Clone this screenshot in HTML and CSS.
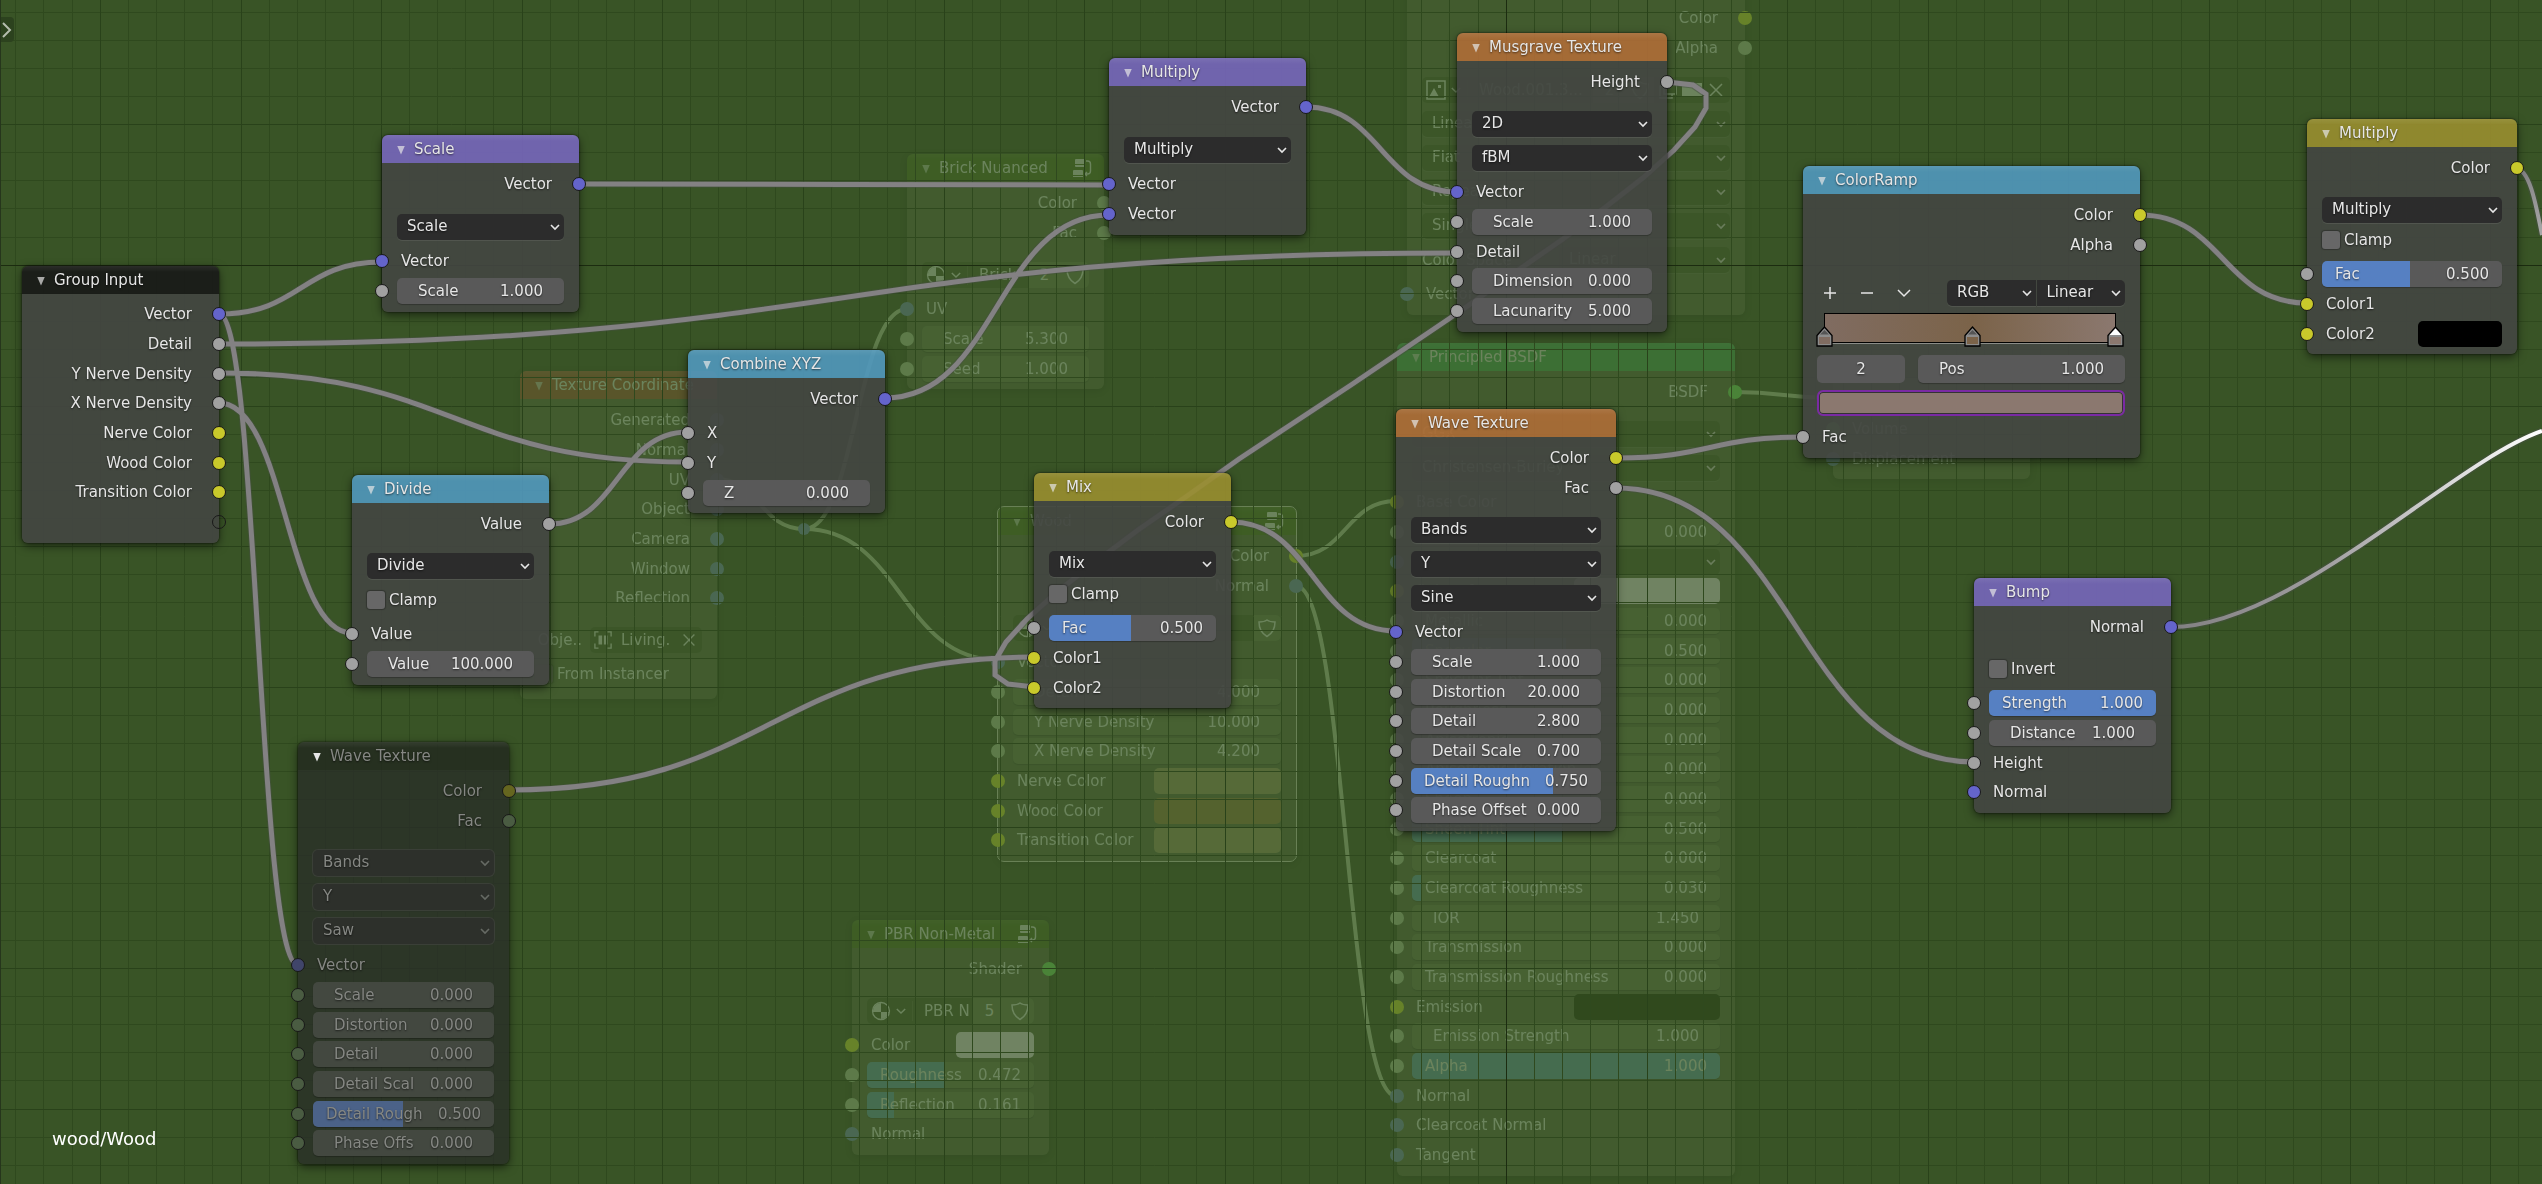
FILE: index.html
```html
<!DOCTYPE html>
<html lang="en">
<head>
<meta charset="utf-8">
<meta name="viewport" content="width=device-width, initial-scale=1">
<title>wood/Wood - Node Editor</title>
<link rel="stylesheet" href="styles.css">
</head>
<body>
<svg class="defs" aria-hidden="true">
  <symbol id="i-group" viewBox="0 0 20 20">
    <path fill="currentColor" d="M4 1h8a1 1 0 0 1 1 1v4H3V2a1 1 0 0 1 1-1zM3 7h10v1a1 1 0 0 1-1 1H4a1 1 0 0 1-1-1zM2 12h8a1 1 0 0 1 1 1v4H1v-4a1 1 0 0 1 1-1zM1 18h10v1H1z"/>
    <path fill="none" stroke="currentColor" stroke-width="1.4" d="M14 3h1.500a3 3 0 0 1 3 3v7a3 3 0 0 1-3 3H13m2-2-2 2 2 2"/>
  </symbol>
  <symbol id="i-material" viewBox="0 0 20 20">
    <circle cx="10" cy="10" r="8.500" fill="none" stroke="currentColor" stroke-width="1.300"/>
    <path fill="currentColor" d="M10 2v9H2a8 8 0 0 1 8-9zM10 11h8a8 8 0 0 1-8 7z"/>
  </symbol>
  <symbol id="i-shield" viewBox="0 0 20 20">
    <path fill="none" stroke="currentColor" stroke-width="1.500" d="M10 2c2 1.500 5 2 8 2 0 7-2 11-8 14.500C4 15 2 11 2 4c3 0 6-.5 8-2z"/>
  </symbol>
  <symbol id="i-image" viewBox="0 0 20 20">
    <path fill="none" stroke="currentColor" stroke-width="1.500" d="M1 1h18v18H1z"/>
    <path fill="currentColor" d="M3 17l5-9 5 9zM12 5h3v3h-3z"/>
  </symbol>
  <symbol id="i-object" viewBox="0 0 20 20">
    <path fill="none" stroke="currentColor" stroke-width="1.500" d="M1 6V1h4M15 1h4v5M19 14v5h-4M5 19H1v-5"/>
    <path fill="currentColor" d="M5 5h4v10H5zM11 5h4v10h-4z"/>
  </symbol>
  <symbol id="i-copy" viewBox="0 0 20 20">
    <path fill="none" stroke="currentColor" stroke-width="1.500" d="M6 2h12v12H6zM6 6H2v12h12v-4"/>
  </symbol>
  <symbol id="i-x" viewBox="0 0 20 20">
    <path fill="none" stroke="currentColor" stroke-width="1.500" d="M4 4l12 12M16 4L4 16"/>
  </symbol>
  <symbol id="i-down" viewBox="0 0 20 20">
    <path fill="none" stroke="currentColor" stroke-width="2" d="M4 7l6 6 6-6"/>
  </symbol>
</svg>

<main class="editor">

  <!-- parent node tree, dimmed behind the group being edited -->
  <div class="backdrop">
    <svg class="wires">
      <path d="M716 479C760 479 760 529 804 529C856 529 856 309 907 309"/>
      <path d="M804 529C901 529 901 660 998 660"/>
      <path d="M1296 556C1346 556 1346 501 1396 501"/>
      <path d="M1296 586C1346 586 1346 1096 1396 1096"/>
      <path d="M1735 392C1784 392 1784 398 1833 398"/>
      <circle class="reroute" cx="804" cy="529" r="6"/>
    </svg>

    <section class="node texture" id="g-coord">
      <header><button class="fold" aria-label="Collapse"></button><h2>Texture Coordinate</h2></header>
      <div class="body">
        <ul class="outs">
          <li>Generated<i class="s vec"></i></li><li>Normal<i class="s vec"></i></li><li>UV<i class="s vec"></i></li><li>Object<i class="s vec"></i></li>
          <li>Camera<i class="s vec"></i></li><li>Window<i class="s vec"></i></li><li>Reflection<i class="s vec"></i></li>
        </ul>
        <div class="props">
          <div class="prop obj"><span>Obje..</span><div class="id"><svg><use href="#i-object"/></svg><span class="grow">Living.</span><button aria-label="Clear"><svg><use href="#i-x"/></svg></button></div></div>
          <label class="check"><input type="checkbox">From Instancer</label>
        </div>
      </div>
    </section>

    <section class="node group" id="g-brick">
      <header><button class="fold" aria-label="Collapse"></button><h2>Brick Nuanced</h2><svg class="gi"><use href="#i-group"/></svg></header>
      <div class="body">
        <ul class="outs"><li>Color<i class="s val"></i></li><li>Fac<i class="s val"></i></li></ul>
        <div class="props"><div class="prop"><div class="id"><button aria-label="Browse"><svg><use href="#i-material"/></svg><svg class="sm"><use href="#i-down"/></svg></button><span class="grow name">Brick</span><span class="users">2</span><button class="fake" aria-label="Fake user"><svg><use href="#i-shield"/></svg></button></div></div></div>
        <ul class="ins">
          <li><i class="s vec"></i>UV</li>
          <li><i class="s val"></i><label class="num"><span>Scale</span><input value="5.300"></label></li>
          <li><i class="s val"></i><label class="num"><span>Seed</span><input value="1.000"></label></li>
        </ul>
      </div>
    </section>

    <section class="node group active" id="g-wood">
      <header><button class="fold" aria-label="Collapse"></button><h2>Wood</h2><svg class="gi"><use href="#i-group"/></svg></header>
      <div class="body">
        <ul class="outs"><li>Color<i class="s col"></i></li><li>Normal<i class="s vec"></i></li></ul>
        <div class="props"><div class="prop"><div class="id"><button aria-label="Browse"><svg><use href="#i-material"/></svg><svg class="sm"><use href="#i-down"/></svg></button><span class="grow name">Wood</span><button class="fake" aria-label="Fake user"><svg><use href="#i-shield"/></svg></button></div></div></div>
        <ul class="ins">
          <li><i class="s vec"></i>Vector</li>
          <li><i class="s val"></i><label class="num"><span>Detail</span><input value="4.000"></label></li>
          <li><i class="s val"></i><label class="num"><span>Y Nerve Density</span><input value="10.000"></label></li>
          <li><i class="s val"></i><label class="num"><span>X Nerve Density</span><input value="4.200"></label></li>
          <li><i class="s col"></i>Nerve Color<button class="swatch nerve" aria-label="Nerve Color"></button></li>
          <li><i class="s col"></i>Wood Color<button class="swatch wood" aria-label="Wood Color"></button></li>
          <li><i class="s col"></i>Transition Color<button class="swatch nerve" aria-label="Transition Color"></button></li>
        </ul>
      </div>
    </section>

    <section class="node group" id="g-pbr">
      <header><button class="fold" aria-label="Collapse"></button><h2>PBR Non-Metal</h2><svg class="gi"><use href="#i-group"/></svg></header>
      <div class="body">
        <ul class="outs"><li>Shader<i class="s shd"></i></li></ul>
        <div class="props"><div class="prop"><div class="id"><button aria-label="Browse"><svg><use href="#i-material"/></svg><svg class="sm"><use href="#i-down"/></svg></button><span class="grow name">PBR N</span><span class="users">5</span><button class="fake" aria-label="Fake user"><svg><use href="#i-shield"/></svg></button></div></div></div>
        <ul class="ins">
          <li><i class="s col"></i>Color<button class="swatch white" aria-label="Color"></button></li>
          <li><i class="s val"></i><label class="num slider" style="--fill:47%"><span>Roughness</span><input value="0.472"></label></li>
          <li><i class="s val"></i><label class="num slider" style="--fill:16%"><span>Reflection</span><input value="0.161"></label></li>
          <li><i class="s vec"></i>Normal</li>
        </ul>
      </div>
    </section>

    <section class="node texture" id="g-image">
      <header><button class="fold" aria-label="Collapse"></button><h2>Image Texture</h2></header>
      <div class="body">
        <ul class="outs"><li>Color<i class="s col"></i></li><li>Alpha<i class="s val"></i></li></ul>
        <div class="props">
          <div class="prop"><div class="id"><button aria-label="Browse"><svg><use href="#i-image"/></svg><svg class="sm"><use href="#i-down"/></svg></button><span class="grow name">Wood.001.3...</span><span class="users">2</span><button class="fake" aria-label="Fake user"><svg><use href="#i-shield"/></svg></button><button aria-label="New"><svg><use href="#i-copy"/></svg></button><span class="folder"></span><button aria-label="Unlink"><svg><use href="#i-x"/></svg></button></div></div>
          <div class="prop"><select aria-label="Interpolation"><option>Linear</option></select></div>
          <div class="prop"><select aria-label="Projection"><option>Flat</option></select></div>
          <div class="prop"><select aria-label="Extension"><option>Repeat</option></select></div>
          <div class="prop"><select aria-label="Source"><option>Single Image</option></select></div>
          <label class="prop half"><span>Color Space</span><select><option>Linear</option></select></label>
        </div>
        <ul class="ins"><li><i class="s vec"></i>Vector</li></ul>
      </div>
    </section>

    <section class="node shader" id="g-bsdf">
      <header><button class="fold" aria-label="Collapse"></button><h2>Principled BSDF</h2></header>
      <div class="body">
        <ul class="outs"><li>BSDF<i class="s shd"></i></li></ul>
        <div class="props">
          <div class="prop"><select aria-label="Distribution"><option>GGX</option></select></div>
          <div class="prop"><select aria-label="Subsurface method"><option>Christensen-Burley</option></select></div>
        </div>
        <ul class="ins">
          <li><i class="s col"></i>Base Color</li>
          <li><i class="s val"></i><label class="num slider"><span>Subsurface</span><input value="0.000"></label></li>
          <li class="pick"><i class="s vec"></i><select aria-label="Subsurface Radius"><option></option></select></li>
          <li><i class="s col"></i>Subsurface<button class="swatch white" aria-label="Subsurface Color"></button></li>
          <li><i class="s val"></i><label class="num slider"><span>Metallic</span><input value="0.000"></label></li>
          <li><i class="s val"></i><label class="num slider" style="--fill:50%"><span>Specular</span><input value="0.500"></label></li>
          <li><i class="s val"></i><label class="num slider"><span>Specular Tint</span><input value="0.000"></label></li>
          <li><i class="s val"></i><label class="num slider"><span>Roughness</span><input value="0.000"></label></li>
          <li><i class="s val"></i><label class="num slider"><span>Anisotropic</span><input value="0.000"></label></li>
          <li><i class="s val"></i><label class="num slider"><span>Anisotropic Rotation</span><input value="0.000"></label></li>
          <li><i class="s val"></i><label class="num slider"><span>Sheen</span><input value="0.000"></label></li>
          <li><i class="s val"></i><label class="num slider" style="--fill:49%"><span>Sheen Tint</span><input value="0.500"></label></li>
          <li><i class="s val"></i><label class="num slider"><span>Clearcoat</span><input value="0.000"></label></li>
          <li><i class="s val"></i><label class="num slider" style="--fill:3%"><span>Clearcoat Roughness</span><input value="0.030"></label></li>
          <li><i class="s val"></i><label class="num"><span>IOR</span><input value="1.450"></label></li>
          <li><i class="s val"></i><label class="num slider"><span>Transmission</span><input value="0.000"></label></li>
          <li><i class="s val"></i><label class="num slider"><span>Transmission Roughness</span><input value="0.000"></label></li>
          <li><i class="s col"></i>Emission<button class="swatch black" aria-label="Emission"></button></li>
          <li><i class="s val"></i><label class="num"><span>Emission Strength</span><input value="1.000"></label></li>
          <li><i class="s val"></i><label class="num slider" style="--fill:100%"><span>Alpha</span><input value="1.000"></label></li>
          <li><i class="s vec"></i>Normal</li>
          <li><i class="s vec"></i>Clearcoat Normal</li>
          <li><i class="s vec"></i>Tangent</li>
        </ul>
      </div>
    </section>

    <section class="node" id="g-out">
      <div class="body">
        <ul class="ins"><li><i class="s shd"></i>Surface</li><li><i class="s shd"></i>Volume</li><li><i class="s vec"></i>Displacement</li></ul>
      </div>
    </section>
  </div>

  <svg class="wires" aria-hidden="true">
    <defs>
      <pattern id="grid" x="100" y="265" width="703" height="703" patternUnits="userSpaceOnUse">
        <path class="minor" d="M28.500 0V703M56.500 0V703M84.500 0V703M112.500 0V703M169.500 0V703M197.500 0V703M225.500 0V703M253.500 0V703M309.500 0V703M337.500 0V703M365.500 0V703M393.500 0V703M450.500 0V703M478.500 0V703M506.500 0V703M534.500 0V703M590.500 0V703M618.500 0V703M646.500 0V703M675.500 0V703M0 28.500H703M0 56.500H703M0 84.500H703M0 112.500H703M0 169.500H703M0 197.500H703M0 225.500H703M0 253.500H703M0 309.500H703M0 337.500H703M0 365.500H703M0 393.500H703M0 450.500H703M0 478.500H703M0 506.500H703M0 534.500H703M0 590.500H703M0 618.500H703M0 646.500H703M0 675.500H703"/>
        <path class="major" d="M.5 0V703M141.500 0V703M281.500 0V703M422.500 0V703M562.500 0V703M0 .5H703M0 141.500H703M0 281.500H703M0 422.500H703M0 562.500H703"/>
      </pattern>
      <linearGradient id="sel" gradientUnits="userSpaceOnUse" x1="2171" y1="627" x2="2542" y2="431"><stop offset="0" stop-color="#828082"/><stop offset=".4" stop-color="#a2a0a2"/><stop offset=".8" stop-color="#e0e0e0"/><stop offset="1" stop-color="#fff"/></linearGradient>
      <linearGradient id="sel2" gradientUnits="userSpaceOnUse" x1="2516" y1="168" x2="2542" y2="235"><stop offset="0" stop-color="#828082"/><stop offset="1" stop-color="#a8a8a8"/></linearGradient>
    </defs>
    <rect width="100%" height="100%" fill="url(#grid)"/>
    <path class="axis" d="M0 265.500H9999M1506.500 0V9999"/>
    <g id="links">
      <g class="edge">
        <path id="w1" d="M219 314C301 314 301 262 382 262M219 314C258 314 258 965 298 965M219 344C838 344 838 253 1457 253M219 373C453 373 453 462 688 462M219 403C286 403 286 633 352 633M549 524C618 524 618 432 688 432M579 184C844 184 844 185 1109 185M885 398C997 398 997 215 1109 215M1306 107C1381 107 1381 192 1457 192M509 790C771 790 771 657 1034 657M1231 522C1313 522 1313 631 1396 631M1616 458C1710 458 1710 437 1803 437M1616 488C1795 488 1795 762 1974 762M2140 215C2223 215 2223 303 2307 303M1667 82L1693 85L1706 94L1706 108L1695 127L1674 150L1644 177L1607 206L1563 239L1514 273L1462 310L1351 385L1239 459L1187 496L1138 530L1094 563L1057 592L1027 619L1006 642L995 661L995 675L1008 684L1034 687"/>
      </g>
      <use class="core" href="#w1"/>
    </g>
    <path class="edge" d="M2171 627C2291 627 2452 462 2542 431M2516 168C2530 170 2536 205 2542 235"/>
    <path stroke="url(#sel)" stroke-width="4" d="M2171 627C2291 627 2452 462 2542 431"/>
    <path stroke="url(#sel2)" stroke-width="4" d="M2516 168C2530 170 2536 205 2542 235"/>
  </svg>

  <section class="node io" id="n-input">
    <header><button class="fold" aria-label="Collapse"></button><h2>Group Input</h2></header>
    <div class="body">
      <ul class="outs">
        <li>Vector<i class="s vec"></i></li><li>Detail<i class="s val"></i></li><li>Y Nerve Density<i class="s val"></i></li><li>X Nerve Density<i class="s val"></i></li>
        <li>Nerve Color<i class="s col"></i></li><li>Wood Color<i class="s col"></i></li><li>Transition Color<i class="s col"></i></li><li><i class="s empty"></i></li>
      </ul>
    </div>
  </section>

  <section class="node vector" id="n-scale">
    <header><button class="fold" aria-label="Collapse"></button><h2>Scale</h2></header>
    <div class="body">
      <ul class="outs"><li>Vector<i class="s vec"></i></li></ul>
      <div class="props"><div class="prop"><select aria-label="Operation"><option>Scale</option></select></div></div>
      <ul class="ins"><li><i class="s vec"></i>Vector</li><li><i class="s val"></i><label class="num"><span>Scale</span><input value="1.000"></label></li></ul>
    </div>
  </section>

  <section class="node convert" id="n-divide">
    <header><button class="fold" aria-label="Collapse"></button><h2>Divide</h2></header>
    <div class="body">
      <ul class="outs"><li>Value<i class="s val"></i></li></ul>
      <div class="props"><div class="prop"><select aria-label="Operation"><option>Divide</option></select></div><label class="check"><input type="checkbox">Clamp</label></div>
      <ul class="ins"><li><i class="s val"></i>Value</li><li><i class="s val"></i><label class="num"><span>Value</span><input value="100.000"></label></li></ul>
    </div>
  </section>

  <section class="node muted" id="n-saw">
    <header><button class="fold" aria-label="Collapse"></button><h2>Wave Texture</h2></header>
    <div class="body">
      <ul class="outs"><li>Color<i class="s col"></i></li><li>Fac<i class="s val"></i></li></ul>
      <div class="props">
        <div class="prop"><select aria-label="Wave type"><option>Bands</option></select></div>
        <div class="prop"><select aria-label="Direction"><option>Y</option></select></div>
        <div class="prop"><select aria-label="Profile"><option>Saw</option></select></div>
      </div>
      <ul class="ins">
        <li><i class="s vec"></i>Vector</li>
        <li><i class="s val"></i><label class="num"><span>Scale</span><input value="0.000"></label></li>
        <li><i class="s val"></i><label class="num"><span>Distortion</span><input value="0.000"></label></li>
        <li><i class="s val"></i><label class="num"><span>Detail</span><input value="0.000"></label></li>
        <li><i class="s val"></i><label class="num"><span>Detail Scal</span><input value="0.000"></label></li>
        <li><i class="s val"></i><label class="num slider" style="--fill:50%"><span>Detail Rough</span><input value="0.500"></label></li>
        <li><i class="s val"></i><label class="num"><span>Phase Offs</span><input value="0.000"></label></li>
      </ul>
    </div>
  </section>

  <section class="node convert" id="n-combine">
    <header><button class="fold" aria-label="Collapse"></button><h2>Combine XYZ</h2></header>
    <div class="body">
      <ul class="outs"><li>Vector<i class="s vec"></i></li></ul>
      <ul class="ins"><li><i class="s val"></i>X</li><li><i class="s val"></i>Y</li><li><i class="s val"></i><label class="num"><span>Z</span><input value="0.000"></label></li></ul>
    </div>
  </section>

  <section class="node vector" id="n-multiply">
    <header><button class="fold" aria-label="Collapse"></button><h2>Multiply</h2></header>
    <div class="body">
      <ul class="outs"><li>Vector<i class="s vec"></i></li></ul>
      <div class="props"><div class="prop"><select aria-label="Operation"><option>Multiply</option></select></div></div>
      <ul class="ins"><li><i class="s vec"></i>Vector</li><li><i class="s vec"></i>Vector</li></ul>
    </div>
  </section>

  <section class="node color" id="n-mix">
    <header><button class="fold" aria-label="Collapse"></button><h2>Mix</h2></header>
    <div class="body">
      <ul class="outs"><li>Color<i class="s col"></i></li></ul>
      <div class="props joined"><div class="prop"><select aria-label="Blend mode"><option>Mix</option></select></div><label class="check"><input type="checkbox">Clamp</label></div>
      <ul class="ins">
        <li><i class="s val"></i><label class="num slider" style="--fill:49%"><span>Fac</span><input value="0.500"></label></li>
        <li><i class="s col"></i>Color1</li><li><i class="s col"></i>Color2</li>
      </ul>
    </div>
  </section>

  <section class="node texture" id="n-musgrave">
    <header><button class="fold" aria-label="Collapse"></button><h2>Musgrave Texture</h2></header>
    <div class="body">
      <ul class="outs"><li>Height<i class="s val"></i></li></ul>
      <div class="props">
        <div class="prop"><select aria-label="Dimensions"><option>2D</option></select></div>
        <div class="prop"><select aria-label="Type"><option>fBM</option></select></div>
      </div>
      <ul class="ins">
        <li><i class="s vec"></i>Vector</li>
        <li><i class="s val"></i><label class="num"><span>Scale</span><input value="1.000"></label></li>
        <li><i class="s val"></i>Detail</li>
        <li><i class="s val"></i><label class="num"><span>Dimension</span><input value="0.000"></label></li>
        <li><i class="s val"></i><label class="num"><span>Lacunarity</span><input value="5.000"></label></li>
      </ul>
    </div>
  </section>

  <section class="node texture" id="n-wave">
    <header><button class="fold" aria-label="Collapse"></button><h2>Wave Texture</h2></header>
    <div class="body">
      <ul class="outs"><li>Color<i class="s col"></i></li><li>Fac<i class="s val"></i></li></ul>
      <div class="props">
        <div class="prop"><select aria-label="Wave type"><option>Bands</option></select></div>
        <div class="prop"><select aria-label="Direction"><option>Y</option></select></div>
        <div class="prop"><select aria-label="Profile"><option>Sine</option></select></div>
      </div>
      <ul class="ins">
        <li><i class="s vec"></i>Vector</li>
        <li><i class="s val"></i><label class="num"><span>Scale</span><input value="1.000"></label></li>
        <li><i class="s val"></i><label class="num"><span>Distortion</span><input value="20.000"></label></li>
        <li><i class="s val"></i><label class="num"><span>Detail</span><input value="2.800"></label></li>
        <li><i class="s val"></i><label class="num"><span>Detail Scale</span><input value="0.700"></label></li>
        <li><i class="s val"></i><label class="num slider" style="--fill:75%"><span>Detail Roughn</span><input value="0.750"></label></li>
        <li><i class="s val"></i><label class="num"><span>Phase Offset</span><input value="0.000"></label></li>
      </ul>
    </div>
  </section>

  <section class="node convert" id="n-ramp">
    <header><button class="fold" aria-label="Collapse"></button><h2>ColorRamp</h2></header>
    <div class="body">
      <ul class="outs"><li>Color<i class="s col"></i></li><li>Alpha<i class="s val"></i></li></ul>
      <div class="ramp">
        <div class="tools">
          <button aria-label="Add stop"><svg viewBox="0 0 14 14"><path d="M7 1v12M1 7h12"/></svg></button>
          <button aria-label="Delete stop"><svg viewBox="0 0 14 14"><path d="M1 7h12"/></svg></button>
          <button aria-label="Tools"><svg viewBox="0 0 14 14"><path d="M1 4l6 6 6-6"/></svg></button>
          <div class="modes"><select aria-label="Color mode"><option>RGB</option></select><select aria-label="Interpolation"><option>Linear</option></select></div>
        </div>
        <div class="gradient">
          <svg class="stop first" viewBox="0 0 17 21"><path class="box" d="M1 9.500L8.500 1 16 9.500V20H1z"/><path class="tip" d="M4 8.500L8.500 4l4.500 4.500z"/><path fill="#806c61" d="M3 11h11v7H3z"/></svg>
          <svg class="stop mid" viewBox="0 0 17 21"><path class="box" d="M1 9.500L8.500 1 16 9.500V20H1z"/><path class="tip" d="M4 8.500L8.500 4l4.500 4.500z"/><path fill="#7b6349" d="M3 11h11v7H3z"/></svg>
          <svg class="stop last" viewBox="0 0 17 21"><path class="box" d="M1 9.500L8.500 1 16 9.500V20H1z"/><path class="tip on" d="M2.500 9L8.500 2.500 14.500 9z"/><path fill="#8b786f" d="M3 11h11v7H3z"/></svg>
        </div>
        <div class="pair"><input class="index" aria-label="Active stop" value="2"><label class="num"><span>Pos</span><input value="1.000"></label></div>
        <button class="stopcolor" aria-label="Stop color"></button>
      </div>
      <ul class="ins"><li><i class="s val"></i>Fac</li></ul>
    </div>
  </section>

  <section class="node color" id="n-mulcolor">
    <header><button class="fold" aria-label="Collapse"></button><h2>Multiply</h2></header>
    <div class="body">
      <ul class="outs"><li>Color<i class="s col"></i></li></ul>
      <div class="props joined"><div class="prop"><select aria-label="Blend mode"><option>Multiply</option></select></div><label class="check"><input type="checkbox">Clamp</label></div>
      <ul class="ins">
        <li><i class="s val"></i><label class="num slider" style="--fill:49%"><span>Fac</span><input value="0.500"></label></li>
        <li><i class="s col"></i>Color1</li>
        <li><i class="s col"></i>Color2<button class="swatch black" aria-label="Color2"></button></li>
      </ul>
    </div>
  </section>

  <section class="node vector" id="n-bump">
    <header><button class="fold" aria-label="Collapse"></button><h2>Bump</h2></header>
    <div class="body">
      <ul class="outs"><li>Normal<i class="s vec"></i></li></ul>
      <div class="props"><label class="check"><input type="checkbox">Invert</label></div>
      <ul class="ins">
        <li><i class="s val"></i><label class="num slider" style="--fill:100%"><span>Strength</span><input value="1.000"></label></li>
        <li><i class="s val"></i><label class="num"><span>Distance</span><input value="1.000"></label></li>
        <li><i class="s val"></i>Height</li><li><i class="s vec"></i>Normal</li>
      </ul>
    </div>
  </section>

  <button class="sidetab" aria-label="Show toolbar"><svg viewBox="0 0 10 16"><path d="M1 1l7 7-7 7"/></svg></button>
  <p class="path">wood/Wood</p>
</main>
</body>
</html>
```
FILE: styles.css
```css
* { box-sizing: border-box; }

body {
  margin: 0;
  background: #395426;
  color: #e6e6e6;
  font: 15px/20px "DejaVu Sans", sans-serif;
}

button, input, select { font: inherit; color: inherit; margin: 0; padding: 0; border: 0; background: none; }
input, select { appearance: none; outline: 0; text-shadow: inherit; }
ul { list-style: none; margin: 0; padding: 0; }
.defs { position: absolute; width: 0; height: 0; }

.editor {
  position: relative;
  min-height: 100vh;
  overflow: hidden;
  border-left: 1px solid #26361c;
}

/* node canvas */
.wires { position: absolute; inset: 0 auto auto -1px; width: calc(100% + 1px); height: 100%; fill: none; }
.minor { stroke: #2f491e; }
.major { stroke: #29421a; }
.axis { stroke: #1c2c10; }
.edge { stroke: rgba(70, 80, 65, .5); stroke-width: 7; }
.core { stroke: #838183; stroke-width: 5; }

.backdrop {
  position: absolute;
  inset: 0;
  opacity: .28;
  --body: #597146;
  --field: #6b8654;
  --menu: #475f31;
  --fill-color: #67adbc;
  --vec: #769bc7;
  --val: #b9dfa6;
  --col: #ddfc34;
  --shd: #76ff6a;
  --rim: transparent;
  color: #ebffe8;
}
.backdrop .wires { stroke: #c0e3ae; stroke-width: 4; }
.reroute { fill: #769bc7; stroke: none; }

.editor {
  --body: rgba(68, 70, 67, .9);
  --field: #595959;
  --menu: #2c2c2c;
  --fill-color: #5680c2;
  --vec: #6464cb;
  --val: #a1a1a1;
  --col: #c9c92b;
  --shd: #63c763;
  --rim: #181818;
}

.node {
  position: absolute;
  width: 197px;
  border-radius: 6px;
  box-shadow: 0 3px 10px rgba(0, 0, 0, .55), 0 0 2px rgba(0, 0, 0, .8);
  text-shadow: 0 1px 2px rgba(0, 0, 0, .6);
}
.backdrop .node { box-shadow: 0 2px 8px rgba(0, 0, 0, .3); text-shadow: none; }

.node header {
  display: flex;
  align-items: center;
  height: 28px;
  padding: 0 12px 0 15px;
  border-radius: 6px 6px 0 0;
  background: linear-gradient(rgba(255, 255, 255, .07), transparent 6px) var(--head);
}
.node h2 { flex: 1; margin: 0 0 0 9px; font: inherit; white-space: nowrap; }
.fold { width: 8px; height: 9px; margin-top: 2px; background: currentColor; opacity: .7; clip-path: polygon(0 0, 100% 0, 50% 100%); }
.gi { width: 20px; height: 20px; }

.io { --head: rgba(25, 27, 24, .94); }
.vector { --head: rgba(119, 102, 188, .9); }
.convert { --head: rgba(81, 152, 190, .9); }
.texture { --head: rgba(173, 108, 55, .92); }
.color { --head: rgba(153, 142, 48, .9); }
.backdrop .group { --head: #4b7822; }
.backdrop .texture { --head: #ab5b38; }
.backdrop .shader { --head: #44b85c; }
.backdrop .active { outline: 1px solid #e0f5d0; }

.body { padding: 6px 0; border-radius: 0 0 6px 6px; background: var(--body); }
.io .body { padding-top: 5px; }

/* socket rows sit a touch under 30px apart on average */
.outs li, .ins li { position: relative; display: flex; align-items: center; height: 30px; white-space: nowrap; }
.outs li:nth-child(3n), .ins li:nth-child(3n) { height: 29px; }
.outs li { justify-content: flex-end; padding-right: 27px; }
.ins li { padding: 0 15px 0 19px; }
.outs + .ins { padding-top: 4px; }

.s { position: absolute; left: -7px; top: 8px; width: 14px; height: 14px; border: 1px solid var(--rim); border-radius: 50%; }
.outs .s { left: auto; right: -7px; }
.vec { background: var(--vec); }
.val { background: var(--val); }
.col { background: var(--col); }
.shd { background: var(--shd); }

.props { padding: 10px 15px 2px 15px; }
.prop { display: flex; align-items: center; height: 34px; }

select {
  flex: 1;
  min-width: 0;
  height: 26px;
  padding: 0 24px 2px 10px;
  border-radius: 5px;
  box-shadow: 0 1px 0 rgba(255, 255, 255, .08);
  background: var(--menu) url("data:image/svg+xml,%3Csvg xmlns='http://www.w3.org/2000/svg' width='10' height='8'%3E%3Cpath d='M1 2l4 4 4-4' fill='none' stroke='%23e6e6e6' stroke-width='1.600'/%3E%3C/svg%3E") no-repeat right 4px center;
}

.num {
  flex: 1;
  display: flex;
  align-items: center;
  min-width: 0;
  height: 26px;
  margin-left: -4px;
  padding: 0 21px;
  border-radius: 5px;
  box-shadow: 0 1px 1px rgba(0, 0, 0, .25);
  background: var(--field);
}
.num input { flex: 1 1 0; width: 0; min-width: 0; text-align: right; }
.slider { padding: 0 13px; background: linear-gradient(90deg, var(--fill-color) var(--fill, 0%), var(--field) var(--fill, 0%)); }

.check { display: flex; align-items: center; gap: 4px; height: 34px; }
.joined .check { height: 26px; margin-bottom: 4px; }
.check input { width: 18px; height: 18px; border-radius: 3px; background: #676767; box-shadow: 0 0 1px 1px rgba(0, 0, 0, .25); }

.swatch { width: 48%; height: 26px; margin-left: auto; border-radius: 5px; }
.black { background: #000; }
.white { background: #fff; }
.nerve { background: #a0a66a; }
.wood { background: #998a46; }
.backdrop .black { background: #193009; }

/* datablock selector */
.id { flex: 1; display: flex; align-items: center; height: 26px; border-radius: 5px; overflow: hidden; background: var(--menu); }
.id svg { width: 20px; height: 20px; flex: none; }
.id .sm { width: 14px; }
.id button { display: flex; align-items: center; gap: 3px; height: 26px; padding: 0 4px; }
.id .grow { flex: 1; padding: 0 2px 0 11px; overflow: hidden; white-space: nowrap; }
.name { border-left: 1px solid var(--body); }
.id .users { width: 33px; line-height: 26px; text-align: center; background: var(--field); }
.id .fake { background: var(--field); }
.folder { width: 20px; height: 14px; background: currentColor; }
.obj { gap: 8px; }
.obj .id { flex: none; width: 112px; padding-left: 4px; }
.obj .id .grow { padding-left: 9px; }
.obj .id button { padding: 0 4px 0 0; }
.obj > span { flex: 1; text-align: right; }
.obj svg { width: 18px; height: 18px; }
.half span, .half select { flex: 1; }
.ins .pick select { flex: none; width: 48%; margin-left: auto; }

/* muted node */
.muted {
  --head: rgba(35, 42, 32, .85);
  --body: rgba(41, 46, 40, .8);
  --field: #434840;
  --menu: #2d302b;
  --fill-color: #4b6288;
  --vec: #40456a;
  --val: #4a5c42;
  --col: #65661f;
  color: #858783;
}
.muted .fold { background: #e6e6e6; opacity: 1; }
.muted select { box-shadow: 0 0 0 1px #3a3f37; background-image: url("data:image/svg+xml,%3Csvg xmlns='http://www.w3.org/2000/svg' width='10' height='8'%3E%3Cpath d='M1 2l4 4 4-4' fill='none' stroke='%23666a64' stroke-width='1.600'/%3E%3C/svg%3E"); }

/* color ramp */
.ramp { padding: 20px 15px 6px 14px; }
.tools { display: flex; align-items: center; }
.tools button { width: 37px; height: 26px; padding-left: 6px; text-align: left; }
.tools svg { width: 14px; height: 14px; display: block; fill: none; stroke: #e6e6e6; stroke-width: 1.5px; }
.modes { display: flex; gap: 1px; width: 178px; margin-left: auto; }
.modes select:first-child { border-radius: 5px 0 0 5px; }
.modes select:last-child { border-radius: 0 5px 5px 0; }
.gradient { position: relative; height: 30px; margin: 7px 9px 12px 7px; border: 1px solid #000; box-shadow: 0 1px 0 #8a8c88; background: linear-gradient(90deg, #806c61, #7b6349 51%, #8b786f); }
.stop { position: absolute; top: 12px; width: 17px; height: 21px; }
.first { left: -9px; }
.mid { left: calc(51% - 9px); }
.last { left: calc(100% - 8px); }
.box { fill: #8c8c8c; stroke: #000; stroke-width: 1.3px; }
.tip { fill: #555; }
.on { fill: #fff; }
.pair { display: flex; gap: 13px; }
.pair .num { margin: 0; height: 28px; }
.index { width: 88px; height: 28px; border-radius: 5px; text-align: center; background: var(--field); }
.stopcolor { display: block; width: 100%; height: 26px; margin-top: 7px; border: 2px solid #7a2aa3; border-radius: 6px; background: #8b786f; box-shadow: inset 0 0 0 1px #333; }

/* node placement */
#n-input { left: 21px; top: 266px; }
#n-scale { left: 381px; top: 135px; }
#n-divide { left: 351px; top: 475px; }
#n-saw { left: 297px; top: 742px; width: 211px; }
#n-combine { left: 687px; top: 350px; }
#n-multiply { left: 1108px; top: 58px; }
#n-mix { left: 1033px; top: 473px; }
#n-musgrave { left: 1456px; top: 33px; width: 210px; }
#n-wave { left: 1395px; top: 409px; width: 220px; }
#n-ramp { left: 1802px; top: 166px; width: 337px; }
#n-mulcolor { left: 2306px; top: 119px; width: 210px; }
#n-bump { left: 1973px; top: 578px; }
#n-scale .props, #n-multiply .props { padding-top: 11px; }
#g-coord { left: 519px; top: 371px; }
#g-brick { left: 906px; top: 154px; }
#g-wood { left: 997px; top: 507px; width: 298px; }
#g-pbr { left: 851px; top: 920px; }
#g-image { left: 1406px; top: -31px; width: 338px; }
#g-bsdf { left: 1396px; top: 343px; width: 338px; }
#g-out { left: 1832px; top: 378px; }

.sidetab { position: absolute; left: 0; top: 17px; width: 13px; height: 25px; padding: 1px; border-radius: 0 4px 4px 0; background: #2c421e; }
.sidetab svg { display: block; width: 10px; height: 16px; fill: none; stroke: #b4bcae; stroke-width: 2px; }
.path { position: absolute; left: 51px; bottom: 33px; margin: 0; color: #fff; font-size: 18px; line-height: 24px; }
```
